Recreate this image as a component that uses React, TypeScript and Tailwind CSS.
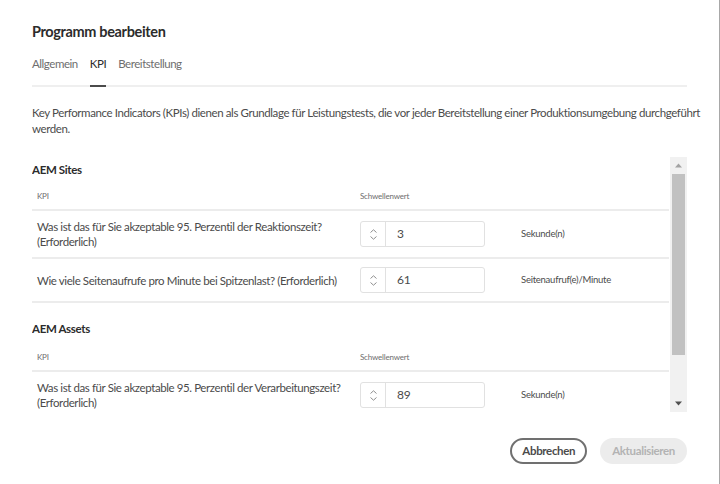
import React from 'react'

const font = { fontFamily: 'Lato, "Noto Sans", sans-serif' }

function Stepper({ value }: { value: string }) {
  return (
    <div className="flex h-[26px] w-[125px] rounded-[3px] border border-[#e1e1e1] bg-white">
      <div className="flex w-[25px] flex-col items-center justify-center gap-[3px] border-r border-[#e1e1e1]">
        <svg width="7" height="4" viewBox="0 0 7 4" fill="none">
          <path d="M0.5 3.5L3.5 0.8L6.5 3.5" stroke="#8e8e8e" strokeWidth="1" />
        </svg>
        <svg width="7" height="4" viewBox="0 0 7 4" fill="none">
          <path d="M0.5 0.5L3.5 3.2L6.5 0.5" stroke="#8e8e8e" strokeWidth="1" />
        </svg>
      </div>
      <div className="flex items-center pl-[11px] text-[12px] tracking-[-0.2px] text-[#4b4b4b]">{value}</div>
    </div>
  )
}

function KpiTable({ rows }: { rows: { q: string; v: string; unit: string }[] }) {
  return (
    <div>
      <div className="flex h-[28px] items-center border-b-2 border-[#ececec] text-[8px] tracking-[-0.2px] text-[#6e6e6e]">
        <div className="w-[323px] pl-[5px]">KPI</div>
        <div className="pl-[5px]">Schwellenwert</div>
      </div>
      {rows.map((r, i) => (
        <div key={i} className="flex items-center border-b-2 border-[#ececec] py-[8px]">
          <div className="w-[323px] pl-[5px] pr-[8px] text-[11.5px] leading-[15px] tracking-[-0.4px] text-[#4b4b4b]">
            {r.q}
          </div>
          <div className="pl-[5px]">
            <Stepper value={r.v} />
          </div>
          <div className="pl-[36px] text-[9.5px] tracking-[-0.25px] text-[#4b4b4b]">{r.unit}</div>
        </div>
      ))}
    </div>
  )
}

export default function App() {
  return (
    <div style={font} className="h-[484px] w-[720px] overflow-hidden border-r border-[#a8a8a8] bg-white px-8 pt-[22px]">
      <h1 className="text-[14.5px] font-bold leading-[20px] tracking-[-0.35px] text-[#2c2c2c]">Programm bearbeiten</h1>

      <div className="mt-[8px] flex gap-[12px] border-b-2 border-[#efefef] text-[11.5px] leading-[16px] tracking-[-0.45px]">
        <div className="pb-[13px] pt-[6px] text-[#6e6e6e]">Allgemein</div>
        <div className="-mb-[2px] border-b-2 border-[#4b4b4b] pb-[13px] pt-[6px] text-[#2c2c2c]">KPI</div>
        <div className="pb-[13px] pt-[6px] text-[#6e6e6e]">Bereitstellung</div>
      </div>

      <p className="-mr-[24px] mt-[18px] text-[11.5px] leading-[16px] tracking-[-0.4px] text-[#4b4b4b]">
        Key Performance Indicators (KPIs) dienen als Grundlage für Leistungstests, die vor jeder Bereitstellung einer Produktionsumgebung durchgeführt werden.
      </p>

      <div className="mt-[20px] flex h-[255px]">
        <div className="flex-1 overflow-hidden pr-[1px]">
          <h2 className="pt-[4px] text-[11.5px] font-bold leading-[18px] tracking-[-0.35px] text-[#2c2c2c]">AEM Sites</h2>
          <div className="mt-[4px]">
            <KpiTable
              rows={[
                { q: 'Was ist das für Sie akzeptable 95. Perzentil der Reaktionszeit? (Erforderlich)', v: '3', unit: 'Sekunde(n)' },
                { q: 'Wie viele Seitenaufrufe pro Minute bei Spitzenlast? (Erforderlich)', v: '61', unit: 'Seitenaufruf(e)/Minute' },
              ]}
            />
          </div>
          <h2 className="mt-[17px] text-[11.5px] font-bold leading-[18px] tracking-[-0.35px] text-[#2c2c2c]">AEM Assets</h2>
          <div className="mt-[6px]">
            <KpiTable
              rows={[
                { q: 'Was ist das für Sie akzeptable 95. Perzentil der Verarbeitungszeit? (Erforderlich)', v: '89', unit: 'Sekunde(n)' },
              ]}
            />
          </div>
        </div>
        <div className="flex w-[17px] flex-col items-center bg-[#f1f1f1]">
          <svg className="mt-[6px]" width="7" height="5" viewBox="0 0 7 5">
            <path d="M3.5 0.5L7 4.5H0Z" fill="#a3a3a3" />
          </svg>
          <div className="mt-[6px] h-[181px] w-[13px] bg-[#c1c1c1]" />
          <div className="flex-1" />
          <svg className="mb-[6px]" width="7" height="5" viewBox="0 0 7 5">
            <path d="M0 0.5H7L3.5 4.5Z" fill="#505050" />
          </svg>
        </div>
      </div>

      <div className="mt-[26px] flex justify-end gap-[13px]">
        <button className="h-[26px] rounded-full border-2 border-[#707070] px-[10px] text-[11.5px] font-bold tracking-[-0.35px] text-[#4b4b4b]">
          Abbrechen
        </button>
        <button className="h-[26px] rounded-full bg-[#ececec] px-[12px] text-[11.5px] font-bold tracking-[-0.35px] text-[#b3b3b3]">
          Aktualisieren
        </button>
      </div>
    </div>
  )
}
